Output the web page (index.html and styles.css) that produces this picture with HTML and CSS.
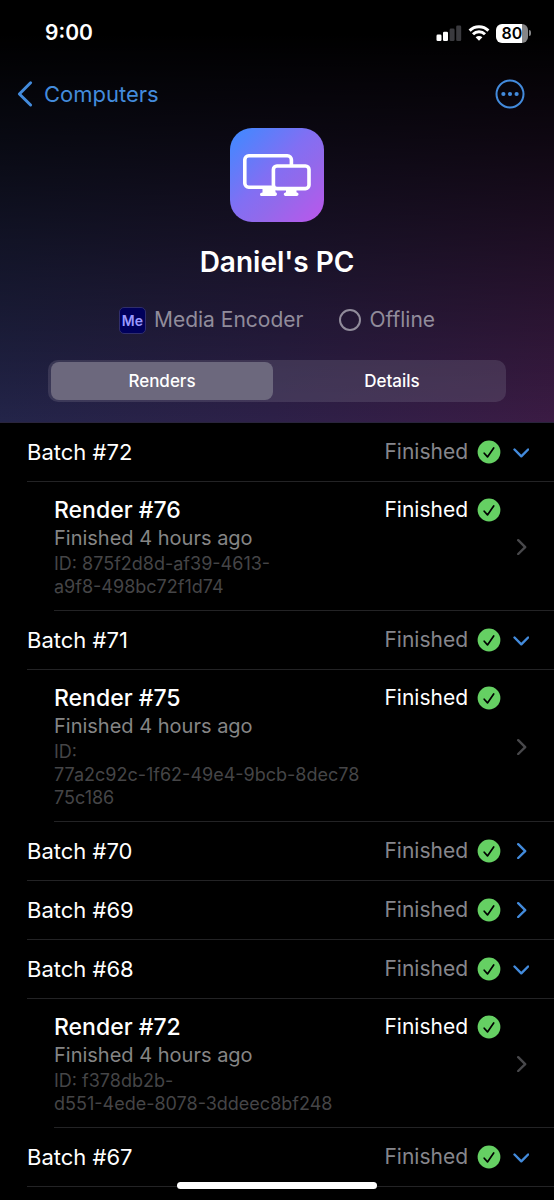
FILE: index.html
```html
<!DOCTYPE html>
<html lang="en">
<head>
<meta charset="utf-8">
<meta name="viewport" content="width=device-width, initial-scale=1">
<title>Daniel's PC</title>
<link rel="stylesheet" href="styles.css">
</head>
<body>
<svg class="defs" aria-hidden="true">
  <symbol id="check" viewBox="0 0 24 24">
    <circle cx="12" cy="12" r="11.4" fill="#65d063"/>
    <path d="M7.2 13.2l3.3 3.7 6.2-9" fill="none" stroke="#000" stroke-width="1.7" stroke-linecap="round" stroke-linejoin="round"/>
  </symbol>
  <symbol id="down" viewBox="0 0 16 16">
    <path d="M1.5 5.5l6.8 6.8 6.8-6.8" fill="none" stroke="currentColor" stroke-width="2.4" stroke-linecap="round" stroke-linejoin="round"/>
  </symbol>
  <symbol id="right" viewBox="0 0 16 16">
    <path d="M5.2 1.2l7 6.9-7 6.9" fill="none" stroke="currentColor" stroke-width="2.4" stroke-linecap="round" stroke-linejoin="round"/>
  </symbol>
</svg>
<div class="screen">
  <header class="header">
    <div class="statusbar">
      <span class="time">9:00</span>
      <div class="indicators">
        <svg width="26" height="18" viewBox="0 0 26 18" role="img" aria-label="Signal">
          <rect x="0.5" y="10.6" width="5" height="6.4" rx="1.3" fill="#fff"/>
          <rect x="7" y="7.8" width="5" height="9.2" rx="1.3" fill="#fff"/>
          <rect x="13.6" y="4.6" width="5" height="12.4" rx="1.3" fill="#3a3a3e"/>
          <rect x="20.2" y="1.4" width="5" height="15.6" rx="1.3" fill="#3a3a3e"/>
        </svg>
        <svg width="22" height="18" viewBox="0 0 22 18" role="img" aria-label="Wi-Fi">
          <path d="M1.6 6.6a13.4 13.4 0 0 1 18.8 0M5 10.2a8.6 8.6 0 0 1 12 0" fill="none" stroke="#fff" stroke-width="3"/>
          <path d="M11 16.8l-3.4-3.5a4.9 4.9 0 0 1 6.8 0z" fill="#fff"/>
        </svg>
        <div class="battery"><span class="charge">80</span></div>
      </div>
    </div>
    <nav class="nav">
      <a class="back" href="#computers">
        <svg width="17" height="28" viewBox="0 0 17 28" aria-hidden="true"><path d="M14.6 2.800L3.400 14l11.200 11" fill="none" stroke="currentColor" stroke-width="3" stroke-linecap="round" stroke-linejoin="round"/></svg>
        Computers
      </a>
      <button class="more" type="button" aria-label="More">
        <svg width="30" height="30" viewBox="0 0 30 30" aria-hidden="true"><circle cx="15" cy="15" r="13.5" fill="none" stroke="currentColor" stroke-width="2"/><g fill="currentColor"><circle cx="8.4" cy="15" r="2.1"/><circle cx="15" cy="15" r="2.1"/><circle cx="21.6" cy="15" r="2.1"/></g></svg>
      </button>
    </nav>
    <div class="appicon">
      <svg width="94" height="94" viewBox="0 0 94 94" aria-hidden="true">
        <g fill="none" stroke="#fff" stroke-width="3.6">
          <path d="M43 59.2H18.8a4 4 0 0 1-4-4V31.800a4 4 0 0 1 4-4h38.600a4 4 0 0 1 4 4V37"/>
          <rect x="43.400" y="38" width="35.600" height="22.600" rx="3.500"/>
        </g>
        <path d="M32.500 60H45.500V64.300q1.400.3 1.500 1.800 0 1.700-1.500 1.900H31.200q-1.400-.2-1.200-2 .2-1.300 2.500-1.600zM56 61.500h10.500v2.800q2 .4 2.100 1.800 0 1.700-1.500 1.900H55.200q-1.500-.2-1.500-1.900.2-1.400 2.300-1.800z" fill="#fff"/>
      </svg>
    </div>
    <h1 class="title">Daniel's PC</h1>
    <div class="meta">
      <span class="meta-item"><span class="me">Me</span>Media Encoder</span>
      <span class="meta-item"><span class="ring"></span>Offline</span>
    </div>
    <div class="segments" role="tablist">
      <button class="segment selected" type="button" role="tab" aria-selected="true">Renders</button>
      <button class="segment" type="button" role="tab" aria-selected="false">Details</button>
    </div>
  </header>
  <main class="list">
    <button class="row batch" type="button" aria-expanded="true"><span class="name">Batch #72</span><span class="status">Finished<svg class="ok"><use href="#check"/></svg></span><svg class="chev"><use href="#down"/></svg></button>
    <a class="row render" href="#render-76">
      <span class="info"><span class="render-name">Render #76</span><span class="when">Finished 4 hours ago</span><span class="uid">ID: 875f2d8d-af39-4613-<br>a9f8-498bc72f1d74</span></span>
      <span class="status">Finished<svg class="ok"><use href="#check"/></svg></span><svg class="chev"><use href="#right"/></svg>
    </a>
    <button class="row batch" type="button" aria-expanded="true"><span class="name">Batch #71</span><span class="status">Finished<svg class="ok"><use href="#check"/></svg></span><svg class="chev"><use href="#down"/></svg></button>
    <a class="row render" href="#render-75">
      <span class="info"><span class="render-name">Render #75</span><span class="when">Finished 4 hours ago</span><span class="uid">ID:<br>77a2c92c-1f62-49e4-9bcb-8dec78<br>75c186</span></span>
      <span class="status">Finished<svg class="ok"><use href="#check"/></svg></span><svg class="chev"><use href="#right"/></svg>
    </a>
    <button class="row batch" type="button" aria-expanded="false"><span class="name">Batch #70</span><span class="status">Finished<svg class="ok"><use href="#check"/></svg></span><svg class="chev"><use href="#right"/></svg></button>
    <button class="row batch" type="button" aria-expanded="false"><span class="name">Batch #69</span><span class="status">Finished<svg class="ok"><use href="#check"/></svg></span><svg class="chev"><use href="#right"/></svg></button>
    <button class="row batch" type="button" aria-expanded="true"><span class="name">Batch #68</span><span class="status">Finished<svg class="ok"><use href="#check"/></svg></span><svg class="chev"><use href="#down"/></svg></button>
    <a class="row render" href="#render-72">
      <span class="info"><span class="render-name">Render #72</span><span class="when">Finished 4 hours ago</span><span class="uid">ID: f378db2b-<br>d551-4ede-8078-3ddeec8bf248</span></span>
      <span class="status">Finished<svg class="ok"><use href="#check"/></svg></span><svg class="chev"><use href="#right"/></svg>
    </a>
    <button class="row batch" type="button" aria-expanded="true"><span class="name">Batch #67</span><span class="status">Finished<svg class="ok"><use href="#check"/></svg></span><svg class="chev"><use href="#down"/></svg></button>
  </main>
  <div class="home-indicator"></div>
</div>
</body>
</html>
```
FILE: styles.css
```css
* { box-sizing: border-box; }

body {
  margin: 0;
  background: #000;
  color: #fff;
  font-family: Inter, "Liberation Sans", sans-serif;
  font-size: 22px;
  line-height: 28px;
}

button {
  border: 0;
  padding: 0;
  background: none;
  color: inherit;
  font: inherit;
}

a { color: inherit; text-decoration: none; }
svg { display: block; flex: none; }
.defs { display: none; }

.screen { position: relative; min-height: 100vh; }

.header {
  display: flex;
  flex-direction: column;
  padding: 19px 0 20px;
  border-bottom: 1px solid #29243c;
  background:
    linear-gradient(to bottom, #000 8%, rgba(0, 0, 0, 0.76) 32%, rgba(0, 0, 0, 0.36) 68%, rgba(0, 0, 0, 0) 100%),
    linear-gradient(100deg, #202549, #2d2048 55%, #3b1b44);
}

.statusbar {
  display: flex;
  justify-content: space-between;
  align-items: center;
  padding: 0 23px 0 45px;
}

.time { font-size: 21px; font-weight: 600; }
.indicators { display: flex; align-items: center; gap: 6px; }

.battery {
  display: flex;
  align-items: center;
  gap: 1px;
}
.battery::after {
  content: "";
  width: 2px;
  height: 6px;
  border-radius: 0 2px 2px 0;
  background: #858587;
}

.charge {
  width: 32px;
  height: 19px;
  border-radius: 6px;
  background: linear-gradient(to right, #fff 80%, #858587 80%);
  color: #000;
  font-size: 16px;
  font-weight: 600;
  line-height: 19px;
  text-align: center;
}

.nav {
  display: flex;
  justify-content: space-between;
  align-items: center;
  margin-top: 32px;
  padding: 0 29px 0 16px;
  color: #438bdc;
}
.back { display: flex; align-items: center; gap: 11px; }

.appicon {
  align-self: center;
  margin-top: 19px;
  border-radius: 22px;
  background: linear-gradient(135deg, #4388ff 5%, #816ff3 45%, #9369eb 65%, #b659eb 95%);
}

.title {
  margin: 22px 0 0;
  font-size: 28px;
  font-weight: 600;
  line-height: 36px;
  text-align: center;
}

.meta {
  display: flex;
  justify-content: center;
  gap: 36px;
  margin-top: 26px;
  color: #918c9b;
  font-size: 21px;
}
.meta-item { display: flex; align-items: center; gap: 8px; }

.me {
  width: 27px;
  height: 27px;
  border: 1px solid #302e6c;
  border-radius: 5px;
  background: #00005b;
  color: #9999ff;
  font-size: 14px;
  font-weight: 600;
  line-height: 25px;
  text-align: center;
}

.ring {
  width: 22px;
  height: 22px;
  border: 2px solid #918c9b;
  border-radius: 50%;
}

.segments {
  display: grid;
  grid-template-columns: 1fr 1fr;
  gap: 8px;
  margin: 26px 48px 0;
  padding: 2px 3px;
  border-radius: 10px;
  background: rgba(120, 112, 136, 0.3);
}
.segment {
  height: 38px;
  border-radius: 8px;
  font-size: 17px;
  font-weight: 500;
}
.selected { background: #6c687d; }

.list { display: flex; flex-direction: column; }

.row {
  display: flex;
  align-items: center;
  gap: 12px;
  margin-left: 27px;
  padding-right: 25px;
  border-bottom: 1px solid #232325;
  text-align: left;
}
.batch { height: 59px; }
.name { flex: 1; }

.status { display: flex; align-items: center; gap: 9px; font-size: 21px; }
.batch .status { color: #86868c; }
.ok { width: 24px; height: 24px; }
.chev { width: 16px; height: 16px; color: #438bdc; }

.render {
  margin-left: 54px;
  padding-top: 14px;
  padding-bottom: 12px;
}
.render .status { align-self: flex-start; }
.render .chev { color: #48484b; }

.info { display: flex; flex: 1; flex-direction: column; }
.render-name { font-size: 23px; font-weight: 500; }
.when { color: #858585; font-size: 20px; }
.uid { color: #454547; font-size: 18px; line-height: 23px; white-space: nowrap; }

.home-indicator {
  position: absolute;
  bottom: 11px;
  left: 32%;
  width: 36%;
  height: 7px;
  border-radius: 4px;
  background: #fff;
}
```
